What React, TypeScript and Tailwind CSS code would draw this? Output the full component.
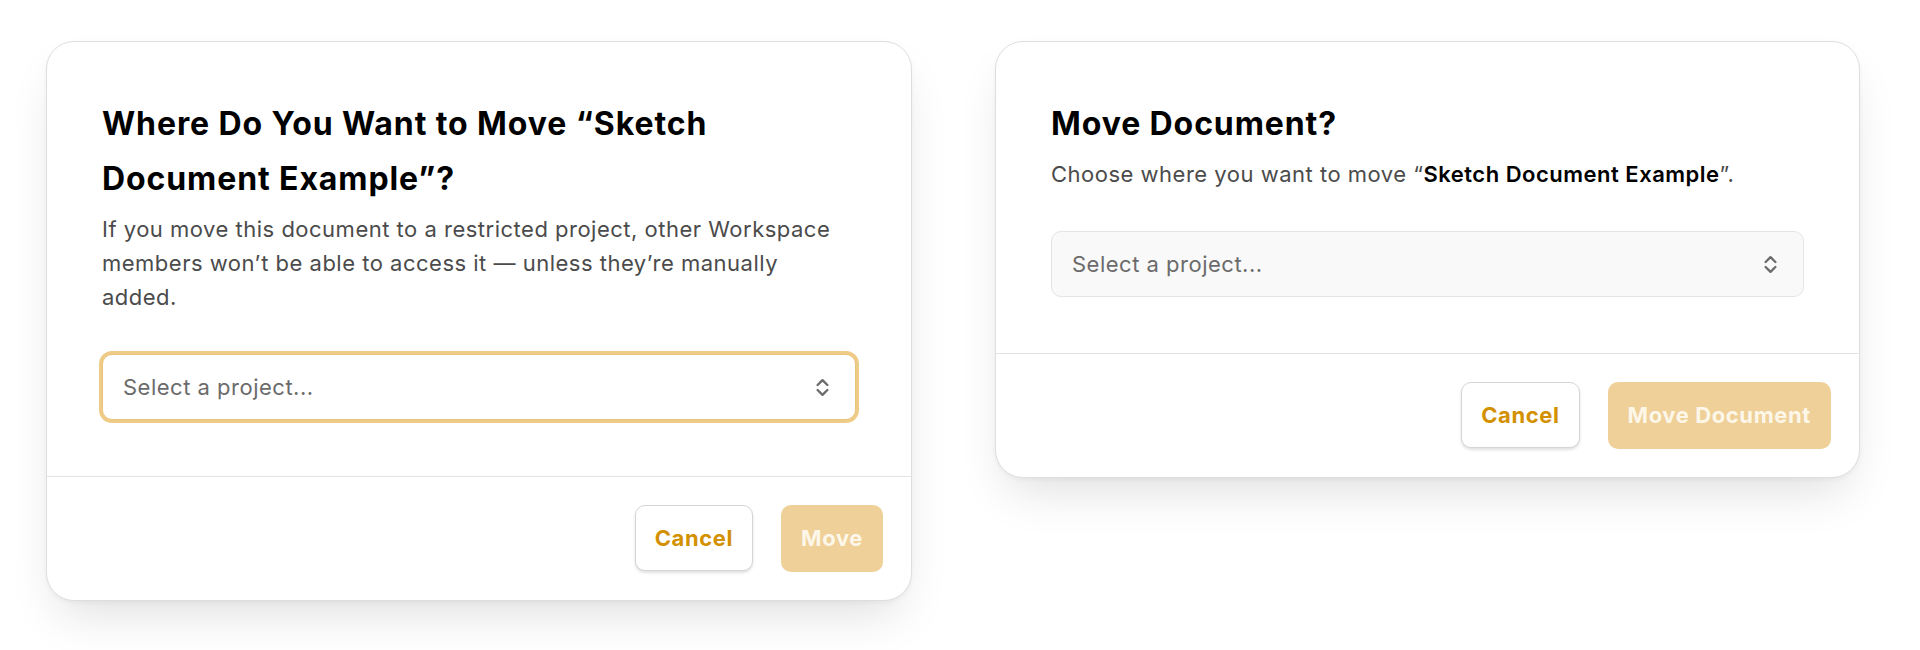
import React from 'react';

// Up/down chevron used inside the project select
function SelectChevrons() {
  return (
    <svg width="13" height="19" viewBox="0 0 13 19" fill="none" className="shrink-0">
      <path d="M1.6 7 L6.5 2.1 L11.4 7" stroke="#6b6b6b" strokeWidth="2.3" strokeLinecap="round" strokeLinejoin="round" />
      <path d="M1.6 12 L6.5 16.9 L11.4 12" stroke="#6b6b6b" strokeWidth="2.3" strokeLinecap="round" strokeLinejoin="round" />
    </svg>
  );
}

interface SelectProps {
  focused?: boolean;
}

function ProjectSelect({ focused }: SelectProps) {
  return (
    <button
      type="button"
      className={
        focused
          ? 'mt-[40px] flex h-[66px] w-full items-center justify-between rounded-[10px] border border-[#eac47b] bg-white pl-[20px] pr-[26px] ring-[3px] ring-[#eecb86]'
          : 'mt-[40px] flex h-[66px] w-full items-center justify-between rounded-[10px] border border-[#e4e4e4] bg-[#f9f9f9] pl-[20px] pr-[26px]'
      }
    >
      <span className="text-[22px] leading-none tracking-[0.5px] text-[#6b6b6b]">Select a project...</span>
      <SelectChevrons />
    </button>
  );
}

interface DialogProps {
  width: string;
  title: React.ReactNode;
  body: React.ReactNode;
  confirm: string;
  focused?: boolean;
}

function MoveDialog({ width, title, body, confirm, focused }: DialogProps) {
  return (
    <div
      className={`${width} shrink-0 rounded-[28px] border border-[#dedede] bg-white shadow-[0_24px_48px_-12px_rgba(0,0,0,0.13),0_2px_4px_rgba(0,0,0,0.04)]`}
    >
      <div className="px-[55px] pb-[56px] pt-[54px]">
        <h2 className="max-w-[680px] text-[32px] font-bold leading-[55px] tracking-[0.9px] text-black">{title}</h2>
        <p className="mt-[6px] text-[22px] leading-[34px] tracking-[0.5px] text-[#4b4b4b]">{body}</p>
        <ProjectSelect focused={focused} />
      </div>
      <div className="flex justify-end gap-[28px] border-t border-[#e3e3e3] p-[28px]">
        <button
          type="button"
          className="h-[66px] rounded-[10px] border border-[#d5d5d5] bg-white px-[19px] text-[22px] font-bold tracking-[0.6px] text-[#d39000] shadow-[0_2px_3px_rgba(0,0,0,0.12)]"
        >
          Cancel
        </button>
        <button
          type="button"
          className="h-[67px] rounded-[10px] bg-[#eed098] px-[20px] text-[22px] font-bold tracking-[0.6px] text-[#fdf7ea]"
        >
          {confirm}
        </button>
      </div>
    </div>
  );
}

export default function App() {
  return (
    <div className="flex h-[650px] w-[1920px] items-start gap-[83px] bg-white pl-[46px] pt-[41px] font-['Inter',sans-serif]">
      <MoveDialog
        width="w-[866px]"
        focused
        title="Where Do You Want to Move “Sketch Document Example”?"
        body="If you move this document to a restricted project, other Workspace members won’t be able to access it — unless they’re manually added."
        confirm="Move"
      />
      <MoveDialog
        width="w-[865px]"
        title="Move Document?"
        body={
          <>
            Choose where you want to move “<span className="font-semibold text-black">Sketch Document Example</span>”.
          </>
        }
        confirm="Move Document"
      />
    </div>
  );
}
